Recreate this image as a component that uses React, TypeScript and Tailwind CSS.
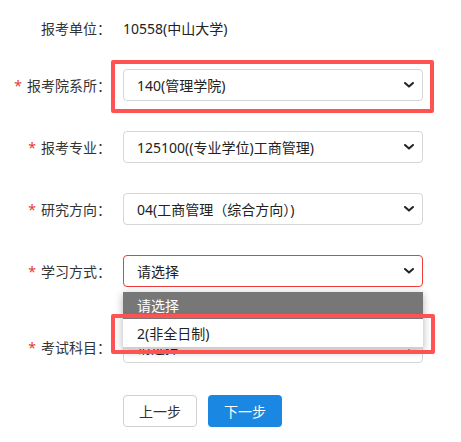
import React from "react";

const Chevron = () => (
  <svg width="10" height="6" viewBox="0 0 10 6" className="absolute right-[8px] top-1/2 -translate-y-1/2">
    <path d="M1 1 L5 4.6 L9 1" fill="none" stroke="#222" strokeWidth="2" strokeLinecap="round" strokeLinejoin="round" />
  </svg>
);

function Label({ text, required = true }: { text: string; required?: boolean }) {
  return (
    <div className="w-[111px] shrink-0 text-right text-[14px] text-[#333] whitespace-nowrap">
      {required && <span className="text-[#e53935] mr-[5px]">*</span>}
      {text}
    </div>
  );
}

function Select({ value, error = false }: { value: string; error?: boolean }) {
  return (
    <div
      className={`relative ml-3 w-[300px] h-[32px] rounded-[4px] border bg-white flex items-center pl-[13px] text-[14px] text-[#222] ${
        error ? "border-[#ef3b3b]" : "border-[#d6d6d6]"
      }`}
    >
      {value}
      <Chevron />
    </div>
  );
}

export default function App() {
  return (
    <div
      className="relative w-[461px] h-[442px] bg-white overflow-hidden"
      style={{ fontFamily: '"Noto Sans", "Noto Sans CJK SC", sans-serif' }}
    >
      <div className="flex flex-col pt-[12px]">
        <div className="flex items-center h-[32px]">
          <Label text="报考单位：" required={false} />
          <div className="ml-3 text-[14px] text-[#222]">10558(中山大学)</div>
        </div>
        <div className="flex items-center h-[32px] mt-[25px]">
          <Label text="报考院系所：" />
          <Select value="140(管理学院)" />
        </div>
        <div className="flex items-center h-[32px] mt-[30px]">
          <Label text="报考专业：" />
          <Select value="125100((专业学位)工商管理)" />
        </div>
        <div className="flex items-center h-[32px] mt-[30px]">
          <Label text="研究方向：" />
          <Select value="04(工商管理（综合方向）)" />
        </div>
        <div className="flex items-center h-[32px] mt-[30px]">
          <Label text="学习方式：" />
          <Select value="请选择" error />
        </div>
        <div className="flex items-center h-[32px] mt-[44px]">
          <Label text="考试科目：" />
          <Select value="请选择" />
        </div>
        <div className="flex items-center h-[32px] mt-[32px] pl-[123px] gap-[11px]">
          <button className="w-[74px] h-[32px] rounded-[4px] border border-[#d0d0d0] bg-white text-[14px] text-[#333]">
            上一步
          </button>
          <button className="w-[74px] h-[32px] rounded-[4px] bg-[#1a88e2] text-[14px] text-white">
            下一步
          </button>
        </div>
      </div>

      {/* open dropdown of 学习方式 */}
      <div className="absolute left-[123px] top-[292px] w-[300px] bg-white shadow-[0_2px_8px_rgba(0,0,0,0.3)] border-b-2 border-[#cfcfcf]">
        <div className="h-[27px] bg-[#777777] text-white text-[14px] flex items-center pl-[14px]">请选择</div>
        <div className="h-[28px] bg-white text-[#222] text-[14px] flex items-center pl-[14px]">2(非全日制)</div>
      </div>

      {/* red highlight boxes */}
      <div className="absolute left-[111px] top-[60px] w-[323px] h-[53px] border-[4px] border-[#ff5353] rounded-[2px]" />
      <div className="absolute left-[111px] top-[314px] w-[324px] h-[40px] border-[4px] border-[#ff5353] rounded-[2px]" />
    </div>
  );
}
